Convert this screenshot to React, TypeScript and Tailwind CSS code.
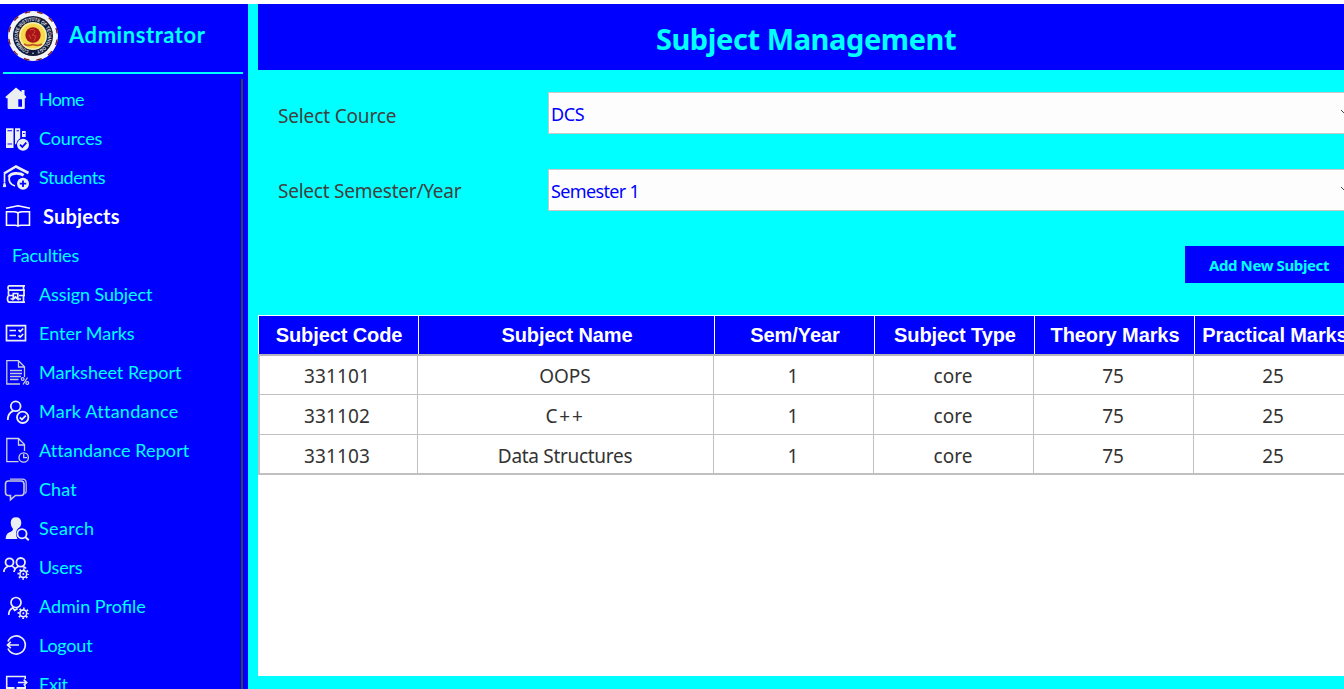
import type { ReactNode } from "react";

const INK = "#eceff1";

function Gear({ cx, cy }: { cx: number; cy: number }) {
  return (
    <g>
      <circle cx={cx} cy={cy} r="3.4" strokeWidth="1.6" />
      <circle cx={cx} cy={cy} r="1" fill={INK} stroke="none" />
      <circle cx={cx} cy={cy} r="4.9" strokeWidth="1.8" strokeDasharray="1.7 2.15" strokeDashoffset="0.85" />
    </g>
  );
}

const icons: Record<string, ReactNode> = {
  home: (
    <path fill={INK} stroke="none" fillRule="evenodd" d="M16 7.500 21.500 12V10h3v4.800L26.300 17l-.8 1.300h-.7V28q0 1-1 1H8.600q-1 0-1-1v-9.700H6.300L5.300 17ZM18.300 19.300v7.400H22v-7.400Z" />
  ),
  courses: (
    <g>
      <path fill={INK} stroke="none" fillRule="evenodd" d="M6 9.300h7.500V29H6ZM7.500 11.300v1h4.500v-1ZM7.500 24.500v1h4.500v-1ZM15 9.300h5.200v10q-3.500 2-4 6H15ZM16.500 11.300v1H19v-1ZM22 12h3.700v6H22ZM23 14v1h1.700v-1Z" />
      <circle cx="23" cy="25.700" r="6" fill={INK} stroke="none" />
      <path stroke="#0000ff" d="m20 25.700 2.300 2.300 4-4.300" />
    </g>
  ),
  students: (
    <g>
      <path strokeWidth="2.600" d="M4 15.500 16 8.500l12.500 6.500" />
      <path strokeWidth="1.600" d="M4.500 15.500v9M4.500 25l-1 4M4.500 25l1 4" />
      <path strokeWidth="2.800" d="M9 19q1-3 6-3.500 6-.3 8.500 2" />
      <path strokeWidth="1.800" d="M9.300 18.500Q8 26 15 28" />
      <circle cx="23" cy="25.700" r="6" fill={INK} stroke="none" />
      <path stroke="#0000ff" strokeWidth="1.800" d="M23 22.500v6.400M19.800 25.700h6.400" />
    </g>
  ),
  subjects: (
    <g stroke="#fff" strokeWidth="1.600">
      <path d="m6 11.300 12-2.500 12 2.500" />
      <path d="M6.500 14.700H14q4 0 4 2.300 0-2.300 4-2.300h7.500v13.500H21q-3 0-3 1.500 0-1.500-3-1.500H6.500ZM18 16.500v13" />
    </g>
  ),
  assign: (
    <path strokeWidth="1.700" d="M25 10.800H9.500Q8 10.800 8 12.900t1.500 2.300H25M23.500 10.800v4.400M8.500 15.500v4.500M24 15v5M25 20.500H19M13 20.500H9.500Q7.500 20.500 7.500 23.700t2 3.500H25M23.500 20v7M10.500 24H13M18 24h3M13.300 18.500h4.500v5.500l-2.250-2-2.250 2Z" />
  ),
  marks: (
    <g strokeWidth="1.700">
      <path d="M6.500 11.700h19v15h-19Z" />
      <path d="M9.500 16.500H16M9.500 21.500H16" />
      <path d="m18.500 16 1.700 1.500 3-3M18.500 21.500l1.700 1.500 3-3" />
    </g>
  ),
  marksheet: (
    <g stroke="#c8ccd8" strokeWidth="1.300">
      <path d="M20 31H6.800V7.700h11.700l6 6V24M18.500 8v6h6" />
      <path d="M10 17.500h12M10 20.500h12M10 23.500h11M10 26.500h8.500" />
      <path d="m27.500 24.500-4.500 7" />
      <circle cx="22.700" cy="26" r="1.400" />
      <circle cx="27.300" cy="30" r="1.400" />
    </g>
  ),
  attendance: (
    <g strokeWidth="1.800">
      <circle cx="15.700" cy="14.300" r="4.900" />
      <path d="M7.800 28q0-7 5.500-9.200" />
      <circle cx="22.700" cy="25.300" r="5.700" />
      <path d="m19.800 25.300 2.100 2.200 3.900-3.900" />
    </g>
  ),
  report: (
    <g stroke="#d0d4de" strokeWidth="1.300">
      <path d="M18.500 30.700H6.800V7.500h11.700l6 6V20M18.500 8v6h6" />
      <circle cx="23.700" cy="26.500" r="4.700" />
      <path d="M23.700 23v3.700h3.500" />
    </g>
  ),
  chat: (
    <g stroke="#c8c8d8" strokeWidth="1.600">
      <path d="M8.500 11H21q3 0 3 3v8.500q0 3-3 3h-5.500l-5 4.200v-4.200h-2q-3 0-3-3V14q0-3 3-3Z" />
      <path strokeWidth="1.200" d="M10 9.200h12.500q3.700 0 3.700 4V21q0 1.700-1 2.500" />
    </g>
  ),
  search: (
    <g>
      <path fill={INK} stroke="none" d="M16 8.300q5.300 0 5.300 5.700 0 2-1.300 4-4 2-4 6.500 0 3 1.500 5.500H5.700q0-5 3.300-6.500 4-1.500 4-3.500-2.300-2.500-2.300-6 0-5.700 5.300-5.700Z" />
      <circle cx="22" cy="24.700" r="4.600" />
      <path d="m25.300 28 3.500 3.300" strokeWidth="1.900" />
    </g>
  ),
  users: (
    <g strokeWidth="1.800">
      <circle cx="9.500" cy="14.300" r="4" />
      <circle cx="20.700" cy="14.300" r="4.300" />
      <path d="M3.900 24q0-4 4-5.500M11.300 18q2.500.7 3.500 2.500M14 24q.5-4 4.500-5.500M22.700 18.500q2 .5 3.300 2" />
      <Gear cx={23.300} cy={26} />
    </g>
  ),
  profile: (
    <g strokeWidth="1.700">
      <circle cx="16" cy="15.500" r="5" />
      <path d="M8.700 28q0-5 4-7.200l2 2.500 3-1.700" />
      <Gear cx={23.300} cy={26.300} />
    </g>
  ),
  logout: (
    <path d="M8 15.500A9 9 0 1 1 8 22.500M19 19H7.700M10.800 15.800 7.500 19l3.300 3.200" strokeWidth="1.700" />
  ),
  exit: (
    <g strokeWidth="1.600">
      <path d="M6.700 24V11.500h18.500V14M25.200 20.500V24M18 17.500h8.500M23.700 14.700l3 2.800-3 2.800" />
      <path d="M7 23h7.500M16.500 23h8.500" strokeWidth="2" />
    </g>
  ),
};

const menu = [
  { icon: "home", label: "Home", type: "text-[18px] tracking-[-0.8px]" },
  { icon: "courses", label: "Cources", type: "text-[18px] tracking-[-0.1px]" },
  { icon: "students", label: "Students", type: "text-[18px] tracking-[-0.45px]" },
  { icon: "subjects", label: "Subjects", type: "text-[20px] tracking-[0.2px]" },
  { icon: "", label: "Faculties", type: "text-[18px] tracking-[-0.2px]" },
  { icon: "assign", label: "Assign Subject", type: "text-[18px] tracking-[-0.1px]" },
  { icon: "marks", label: "Enter Marks", type: "text-[18px]" },
  { icon: "marksheet", label: "Marksheet Report", type: "text-[18px]" },
  { icon: "attendance", label: "Mark Attandance", type: "text-[18px] tracking-[0.25px]" },
  { icon: "report", label: "Attandance Report", type: "text-[18px] tracking-[0.1px]" },
  { icon: "chat", label: "Chat", type: "text-[18px] tracking-[0.1px]" },
  { icon: "search", label: "Search", type: "text-[18px] tracking-[0.4px]" },
  { icon: "users", label: "Users", type: "text-[18px] tracking-[-0.2px]" },
  { icon: "profile", label: "Admin Profile", type: "text-[18px]" },
  { icon: "logout", label: "Logout", type: "text-[18px] tracking-[-0.2px]" },
  { icon: "exit", label: "Exit", type: "text-[18px] tracking-[-0.4px]" },
];

function Emblem() {
  return (
    <svg className="h-[50px] w-[50px] shrink-0" viewBox="0 0 50 50">
      <defs>
        <path id="ring" d="M25 40A15 15 0 0 1 25 10A15 15 0 0 1 25 40" />
      </defs>
      <circle cx="25" cy="25" r="25" fill="#f4f4f4" />
      <circle cx="25" cy="25" r="24.300" fill="none" stroke="#7a2028" strokeWidth="1.400" strokeDasharray="5.500 7.220" strokeDashoffset="-3.600" />
      <circle cx="25" cy="25" r="20" fill="#10183c" />
      <text fill="#e2e4e8" className="font-['Liberation_Sans',sans-serif] text-[5px] font-bold">
        <textPath href="#ring" startOffset="4" textLength="86" lengthAdjust="spacingAndGlyphs">COIMBATORE INSTITUTE OF TECHNOLOGY</textPath>
      </text>
      <circle cx="25" cy="25" r="14" fill="#f5efa8" />
      <circle cx="25" cy="25" r="12.300" fill="#f8da48" />
      <circle cx="25" cy="24" r="7.700" fill="#a8141c" />
      <path d="M22 19q5-2 5 2l-3 3 4 1-2 5M21 24l2 4" fill="none" stroke="#d4572c" strokeWidth="0.800" />
      <path d="M16 33q4 2.500 9 .5 5 2 9-.5" fill="none" stroke="#c05a25" strokeWidth="1.800" />
      <circle cx="25" cy="42.300" r="0.800" fill="#e8e8e8" />
    </svg>
  );
}

function Sidebar() {
  return (
    <aside className="flex w-[248px] shrink-0 flex-col overflow-hidden bg-[#0000ff] font-['Lato',sans-serif] text-[#00ffff]">
      <div className="ml-[3px] mr-[5px] flex h-[70px] shrink-0 border-b-2 border-[#00ffff] pl-[5px] pt-[7px]">
        <Emblem />
        <div className="ml-[11px] mt-[10px] text-[22px] leading-7 font-bold tracking-[0.55px]">Adminstrator</div>
      </div>
      <nav className="mr-[5px] mt-[5px] shrink-0 border-r-2 border-[#404040] pt-px">
        {menu.map((m) => (
          <div key={m.label} className="flex h-[39px] items-center whitespace-nowrap">
            {m.icon && (
              <svg className="h-[39px] w-8 shrink-0" viewBox="0 0 32 39" fill="none" stroke={INK} strokeWidth="1.800">
                {icons[m.icon]}
              </svg>
            )}
            <span
              className={`${m.type} pb-[2px] leading-6 ${
                m.label === "Subjects" ? "ml-[11px] font-bold text-white" : m.icon ? "ml-[7px]" : "ml-3"
              }`}
            >
              {m.label}
            </span>
          </div>
        ))}
      </nav>
    </aside>
  );
}

function Select({ value, type }: { value: string; type: string }) {
  return (
    <div className="flex h-[42px] w-[808px] shrink-0 items-center justify-between border border-[#c8c8c8] bg-[#fdfdfd] pl-[2px] pr-[3px] text-[#0000ff]">
      <span className={`mt-[3px] ${type}`}>{value}</span>
      <svg className="h-2 w-3 shrink-0" viewBox="0 0 12 8" fill="none" stroke="#444">
        <path d="m1 1 5 5 5-5" />
      </svg>
    </div>
  );
}

const columns = [
  { name: "Subject Code", width: "w-[160px]" },
  { name: "Subject Name", width: "w-[296px]" },
  { name: "Sem/Year", width: "w-[160px]" },
  { name: "Subject Type", width: "w-[160px]" },
  { name: "Theory Marks", width: "w-[160px]" },
  { name: "Practical Marks", width: "w-[160px]" },
];

const rows = [
  ["331101", "OOPS", "1", "core", "75", "25"],
  ["331102", "C++", "1", "core", "75", "25"],
  ["331103", "Data Structures", "1", "core", "75", "25"],
];

const cellTracking: Record<string, string> = {
  "C++": "tracking-[1.800px]",
  "Data Structures": "tracking-[-0.300px]",
};

function SubjectTable() {
  return (
    <section className="h-[361px] w-[1096px] shrink-0 bg-white">
      <div className="flex h-[39px] border-t border-white bg-[#0000ff] font-['Liberation_Sans',sans-serif] text-[20px] font-bold tracking-[-0.100px] text-white">
        {columns.map((c) => (
          <div key={c.name} className={`${c.width} flex shrink-0 items-center justify-center whitespace-nowrap border-l border-white pl-px`}>
            {c.name}
          </div>
        ))}
      </div>
      <div className="border-y-2 border-l-2 border-[#c0c0c0] border-t-[#b4b4bc]">
        {rows.map((r, i) => (
          <div key={r[0]} className={`flex ${i === 0 ? "h-[39px]" : i === 1 ? "h-10" : "h-[38px]"} ${i < 2 ? "border-b border-[#c0c0c0]" : ""}`}>
            {r.map((cell, j) => (
              <div
                key={columns[j].name}
                className={`${j === 0 ? "w-[158px] pr-[3px]" : `${columns[j].width} pr-px`} ${i < 2 ? "pt-[2px]" : "pt-1"} ${
                  j === 0 ? "tracking-[0.150px]" : cellTracking[cell] ?? "tracking-normal"
                } flex shrink-0 items-center justify-center border-r border-[#c0c0c0] text-[19px] leading-6 text-[#333]`}
              >
                {cell}
              </div>
            ))}
          </div>
        ))}
      </div>
    </section>
  );
}

export default function App() {
  return (
    <div className="flex h-[689px] w-[1344px] overflow-hidden border-t-4 border-white bg-[#00ffff] font-['Noto_Sans',sans-serif]">
      <Sidebar />
      <main className="ml-[10px] flex min-w-0 flex-1 flex-col overflow-hidden">
        <header className="flex h-[66px] w-[1096px] shrink-0 items-center justify-center bg-[#0000ff] pt-1 text-[29px] font-bold tracking-[-0.42px] text-[#00ffff]">
          Subject Management
        </header>
        <div className="mt-[22px] flex h-[42px] shrink-0">
          <label className="w-[290px] shrink-0 pl-5 pt-[10px] text-[19px] leading-7 tracking-[-0.15px] text-[#404040]">Select Cource</label>
          <Select value="DCS" type="text-[18px] tracking-[-0.4px]" />
        </div>
        <div className="mt-[35px] flex h-[42px] shrink-0">
          <label className="w-[290px] shrink-0 pl-5 pt-[8px] text-[19px] leading-7 tracking-[-0.23px] text-[#404040]">Select Semester/Year</label>
          <Select value="Semester 1" type="text-[18px] tracking-[-0.65px]" />
        </div>
        <button className="ml-[927px] mt-[35px] flex h-[37px] w-[168px] shrink-0 items-center justify-center bg-[#0000ff] pt-[2px] text-[15px] font-bold tracking-[-0.4px] text-[#00ffff]">
          Add New Subject
        </button>
        <div className="mt-8 shrink-0">
          <SubjectTable />
        </div>
      </main>
    </div>
  );
}
